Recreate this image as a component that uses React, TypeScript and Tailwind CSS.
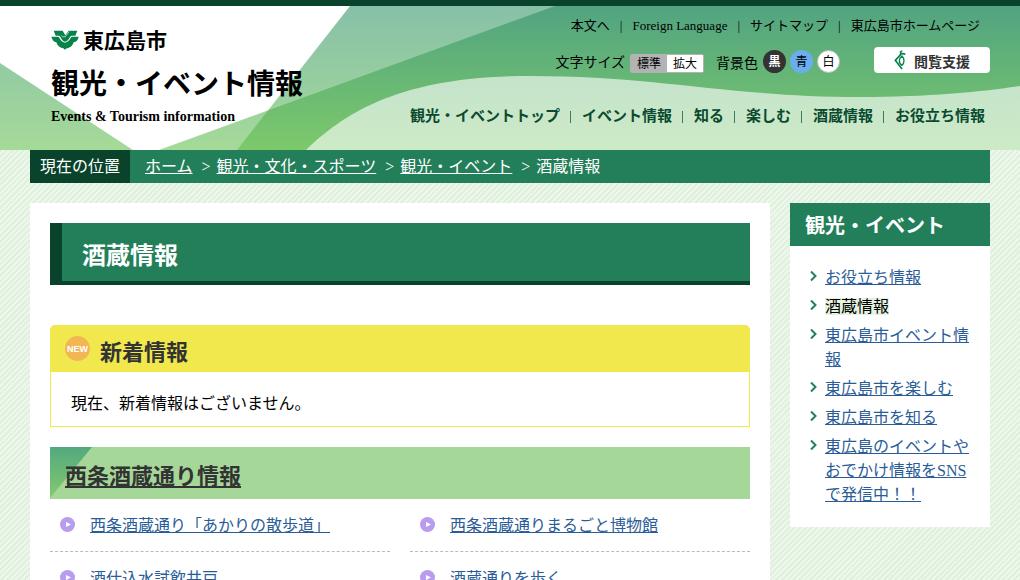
import React from "react";

const quickLinks = ["本文へ", "Foreign Language", "サイトマップ", "東広島市ホームページ"];
const navLinks = ["観光・イベントトップ", "イベント情報", "知る", "楽しむ", "酒蔵情報", "お役立ち情報"];
const crumbs = ["ホーム", "観光・文化・スポーツ", "観光・イベント"];
const sideLinks = [
  "お役立ち情報",
  "酒蔵情報",
  "東広島市イベント情報",
  "東広島市を楽しむ",
  "東広島市を知る",
  "東広島のイベントやおでかけ情報をSNSで発信中！！",
];
const streetLinks = [
  "西条酒蔵通り「あかりの散歩道」",
  "西条酒蔵通りまるごと博物館",
  "酒仕込水試飲井戸",
  "酒蔵通りを歩く",
];

function HeaderArt() {
  return (
    <svg
      aria-hidden="true"
      className="absolute inset-0 h-full w-full"
      viewBox="0 0 1020 144"
      preserveAspectRatio="none"
    >
      <defs>
        <linearGradient id="leaf" gradientUnits="userSpaceOnUse" x1="0" y1="0" x2="0" y2="144">
          <stop offset="0" stopColor="#258c61" />
          <stop offset="1" stopColor="#5bbc44" />
        </linearGradient>
      </defs>
      <g fill="url(#leaf)" fillOpacity="0.55">
        <path d="M0 57 L133 144 H0 Z" />
        <path d="M350 0 H1020 V144 H237 Z" />
        <path d="M555 0 H1020 V144 H159 Z" />
      </g>
      <path
        d="M306 144 C345 107 400 70 530 70 C660 70 730 91 860 91 C930 91 980 86 1020 80 V144 Z"
        fill="#fff"
        fillOpacity="0.62"
      />
    </svg>
  );
}

function Emblem() {
  return (
    <svg aria-hidden="true" className="h-5 w-7" viewBox="0 0 84 60" fill="#07824a">
      <path d="M8 2 H35 L43 16 L53 2 H79 L73 17 H63 C54 17 56 32 42 35 C30 32 31 17 22 17 H14 Z" />
      <path d="M1 20 H21 C27 20 26 34 42 38 C59 34 57 20 64 20 H83 C81 30 76 36 68 37 C65 48 55 55 47 55 L42 59 L37 55 C28 54 19 48 16 37 C8 35 3 29 1 20 Z" />
      <path d="M31 17 C36 22 38 20 43 20 L54 5" fill="none" stroke="#fff" strokeWidth="2" />
    </svg>
  );
}

function SupportIcon() {
  return (
    <svg aria-hidden="true" className="h-5 w-3" viewBox="0 0 36 60" fill="none" stroke="#07824a" strokeWidth="5">
      <path d="M20 14 L4 31 L24 57" />
      <path d="M22 14 C17 8 20 3 25 3 M18 14 C24 9 29 10 34 13" />
      <path d="M24 18 C32 26 32 38 24 46 C13 40 14 25 24 18 Z" strokeWidth="4" />
    </svg>
  );
}

function Play() {
  return (
    <svg aria-hidden="true" className="h-[15px] w-[15px] shrink-0" viewBox="0 0 15 15">
      <circle cx="7.5" cy="7.5" r="7.5" fill="#b89cf0" />
      <path d="M6 5 L11 7.5 L6 10 Z" fill="#fff" />
    </svg>
  );
}

export default function App() {
  return (
    <div className="min-h-screen bg-[repeating-linear-gradient(135deg,#eef7ec_0px,#eef7ec_2px,#dff0dd_2px,#dff0dd_4px)] font-['Liberation_Serif','Noto_Sans_CJK_JP',serif] text-base text-black">
      <header className="relative border-t-6 border-[#0a432b] bg-white">
        <HeaderArt />
        <div className="relative flex h-36 justify-between pr-[30px] pl-[51px]">
          <div className="flex flex-col pt-[22px]">
            <div className="flex h-6 items-center gap-1">
              <Emblem />
              <span className="pt-px text-[21px] leading-6 font-bold">東広島市</span>
            </div>
            <h1 className="mt-2 pt-0.5 text-[28px] leading-[46px] font-bold whitespace-nowrap">観光・イベント情報</h1>
            <p className="pt-px text-sm leading-4 font-bold">Events &amp; Tourism information</p>
          </div>
          <div className="flex flex-col items-end">
            <ul className="flex pt-2.5 pr-2.5 text-[13px] leading-5 whitespace-nowrap">
              {quickLinks.map((t, i) => (
                <li key={t}>
                  {i > 0 && <span className="mx-2.5">|</span>}
                  <a href="#">{t}</a>
                </li>
              ))}
            </ul>
            <div className="mt-[11px] flex h-[26px] items-center text-sm">
              <span className="mr-[5px] pt-1.5">文字サイズ</span>
              <div className="mt-1.5 mr-3 flex h-[19px] rounded-xs border border-[#b3b3b3] text-xs leading-[19px]">
                <button className="w-9 bg-[#b3b3b3]">標準</button>
                <button className="w-9 bg-white">拡大</button>
              </div>
              <span className="mr-[5px] pt-2">背景色</span>
              <div className="mt-0.5 flex gap-1 text-xs leading-[23px]">
                <button className="h-[23px] w-[23px] rounded-full bg-[#333] pt-px font-bold text-white">黒</button>
                <button className="h-[23px] w-[23px] rounded-full bg-[#6aaeed] pt-px">青</button>
                <button className="h-[23px] w-[23px] rounded-full border border-[#bbb] bg-white pt-px leading-[21px]">白</button>
              </div>
              <a
                href="#"
                className="ml-[34px] flex h-[26px] w-29 items-center justify-center gap-2 rounded bg-white font-bold text-[#333]"
              >
                <SupportIcon />
                <span className="pt-1.5 leading-[22px]">閲覧支援</span>
              </a>
            </div>
            <nav className="mt-[31px] pr-[5px]">
              <ul className="flex text-[15px] leading-6 whitespace-nowrap text-[#0a4a30]">
                {navLinks.map((t, i) => (
                  <li key={t} className="flex items-center">
                    {i > 0 && <span aria-hidden="true" className="mx-2.5 mt-0.5 h-3 w-0.5 border-l border-[#3b7c5a]" />}
                    <a href="#" className="font-bold">{t}</a>
                  </li>
                ))}
              </ul>
            </nav>
          </div>
        </div>
      </header>

      <div className="px-[30px]">
        <nav className="flex bg-[#237f5a] leading-[33px] text-white">
          <span className="bg-[#0a432b] px-2.5">現在の位置</span>
          <ol className="flex pl-[15px]">
            {crumbs.map((t) => (
              <li key={t}>
                <a href="#" className="underline">{t}</a>
                <span className="mr-1.5 ml-[9px]">&gt;</span>
              </li>
            ))}
            <li>酒蔵情報</li>
          </ol>
        </nav>

        <div className="flex items-start gap-5 pt-5">
          <main className="min-w-0 flex-1 bg-white p-5">
            <h2 className="border-b-4 border-l-12 border-[#0a432b] bg-[#237f5a] pt-2 pl-5 text-2xl leading-[50px] font-bold text-white">
              酒蔵情報
            </h2>

            <section className="mt-10">
              <div className="flex items-center gap-2.5 rounded-t-[5px] bg-[#f1e84e] px-[15px]">
                <svg aria-hidden="true" className="h-[25px] w-[25px]" viewBox="0 0 25 25">
                  <circle cx="12.5" cy="12.5" r="12.5" fill="#f2b655" />
                  <text
                    x="12.5"
                    y="16"
                    textAnchor="middle"
                    fill="#fff"
                    className="font-['Liberation_Sans',sans-serif] text-[9px] font-bold"
                  >
                    NEW
                  </text>
                </svg>
                <h2 className="pt-2 text-[22px] leading-[39px] font-bold text-[#333]">新着情報</h2>
              </div>
              <p className="border border-t-0 border-[#f1e84e] px-5 pt-5 pb-2.5 leading-6">
                現在、新着情報はございません。
              </p>
            </section>

            <section className="mt-5">
              <div className="relative bg-[#a5d898] px-[15px]">
                <svg
                  aria-hidden="true"
                  className="absolute top-0 left-0 h-[51px] w-[42px]"
                  viewBox="0 0 42 51"
                >
                  <defs>
                    <linearGradient id="corner" x1="0" y1="0" x2="0" y2="1">
                      <stop offset="0" stopColor="#54a87f" />
                      <stop offset="1" stopColor="#83ca6d" />
                    </linearGradient>
                  </defs>
                  <path d="M0 0 H42 L0 51 Z" fill="url(#corner)" />
                </svg>
                <h2 className="relative pt-2 text-[22px] leading-[44px] font-bold">
                  <a href="#" className="text-[#333] underline">西条酒蔵通り情報</a>
                </h2>
              </div>
              <ul className="grid grid-cols-2 gap-x-5">
                {streetLinks.map((t) => (
                  <li
                    key={t}
                    className="flex items-start gap-[15px] border-b border-dashed border-[#bbb] px-2.5 pt-[15px] pb-[13px] leading-6"
                  >
                    <span className="pt-[3px]">
                      <Play />
                    </span>
                    <a href="#" className="text-[#2a5d97] underline">{t}</a>
                  </li>
                ))}
              </ul>
            </section>
          </main>

          <aside className="w-[200px] shrink-0 bg-white">
            <h2 className="bg-[#237f5a] px-[15px] pt-1 text-xl leading-[39px] font-bold text-white">観光・イベント</h2>
            <ul className="flex flex-col gap-[5px] px-5 py-5 leading-6">
              {sideLinks.map((t) => (
                <li key={t} className="flex gap-2">
                  <svg
                    aria-hidden="true"
                    className="mt-[5px] h-2.5 w-[7px] shrink-0"
                    viewBox="0 0 7 10"
                    fill="none"
                    stroke="#237f5a"
                    strokeWidth="2"
                  >
                    <path d="M1 0.5 L5.5 5 L1 9.5" />
                  </svg>
                  {t === "酒蔵情報" ? (
                    <span>
                      <span className="bg-[#e5f3e1]">{t}</span>
                    </span>
                  ) : (
                    <a href="#" className="text-[#2a5d97] underline">{t}</a>
                  )}
                </li>
              ))}
            </ul>
          </aside>
        </div>
      </div>
    </div>
  );
}
